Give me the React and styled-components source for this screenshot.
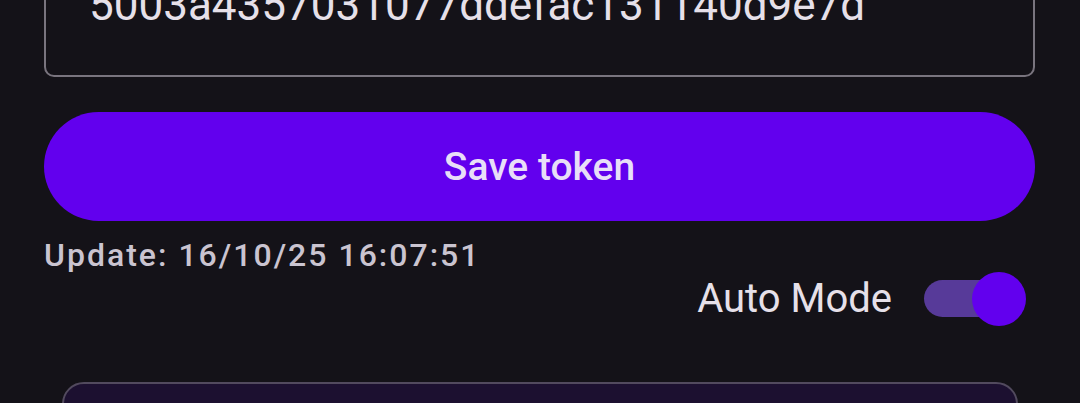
import React, { useState } from "react";
import styled, { createGlobalStyle } from "styled-components";

const Global = createGlobalStyle`
  html, body {
    margin: 0;
    padding: 0;
    background: #141218;
    height: 403px;
    overflow: hidden;
  }
  body {
    font-family: Roboto, "Noto Sans", "Liberation Sans", sans-serif;
  }
`;

const Page = styled.div`
  display: flex;
  flex-direction: column;
  height: 403px;
  overflow: hidden;
  padding: 0 45px 0 44px;
  & > * {
    flex-shrink: 0;
  }
`;

const TokenField = styled.div`
  margin-top: -40px;
  height: 117px;
  box-sizing: border-box;
  border: 2px solid #79747e;
  border-radius: 10px;
  padding: 22px 0 0 43px;
`;

const TokenText = styled.div`
  font-size: 44px;
  line-height: 43px;
  color: #e6e0e9;
  white-space: nowrap;
`;

const SaveButton = styled.button`
  margin-top: 35px;
  height: 109px;
  border: none;
  border-radius: 55px;
  background: #6200ee;
  color: #e8def8;
  font-family: Roboto, "Noto Sans", sans-serif;
  font-size: 39px;
  font-weight: 500;
  padding: 0;
  display: flex;
  align-items: center;
  justify-content: center;
  cursor: pointer;
`;

const UpdatedAt = styled.div`
  margin-top: 19px;
  font-size: 32px;
  line-height: 31px;
  font-weight: 500;
  letter-spacing: 2px;
  color: #cac4d0;
`;

const ModeRow = styled.div`
  display: flex;
  align-items: center;
  justify-content: flex-end;
  gap: 32px;
  height: 54px;
  margin-top: 1px;
  padding-right: 9px;
`;

const ModeLabel = styled.span`
  font-size: 40px;
  color: #e6e0e9;
  line-height: 1;
`;

const Switch = styled.div`
  position: relative;
  width: 102px;
  height: 54px;
  cursor: pointer;
`;

const Track = styled.div`
  margin: 8px 14px 0 0;
  height: 37px;
  border-radius: 19px;
  background: ${(p) => (p.$on ? "#573a99" : "#49454f")};
`;

const Thumb = styled.div`
  position: absolute;
  top: 0;
  left: ${(p) => (p.$on ? "48px" : "0")};
  width: 54px;
  height: 54px;
  border-radius: 50%;
  background: ${(p) => (p.$on ? "#6200ee" : "#938f99")};
`;

const Card = styled.div`
  margin: 56px 17px 0 18px;
  height: 200px;
  border: 2px solid #524a5e;
  border-radius: 22px;
  background: #1c1030;
`;

export default function App() {
  const [auto, setAuto] = useState(true);
  return (
    <>
      <Global />
      <Page>
        <TokenField>
          <TokenText>5003a4357031077ddefac131140d9e7d</TokenText>
        </TokenField>
        <SaveButton>Save token</SaveButton>
        <UpdatedAt>Update: 16/10/25 16:07:51</UpdatedAt>
        <ModeRow>
          <ModeLabel>Auto Mode</ModeLabel>
          <Switch onClick={() => setAuto(!auto)}>
            <Track $on={auto} />
            <Thumb $on={auto} />
          </Switch>
        </ModeRow>
        <Card />
      </Page>
    </>
  );
}
